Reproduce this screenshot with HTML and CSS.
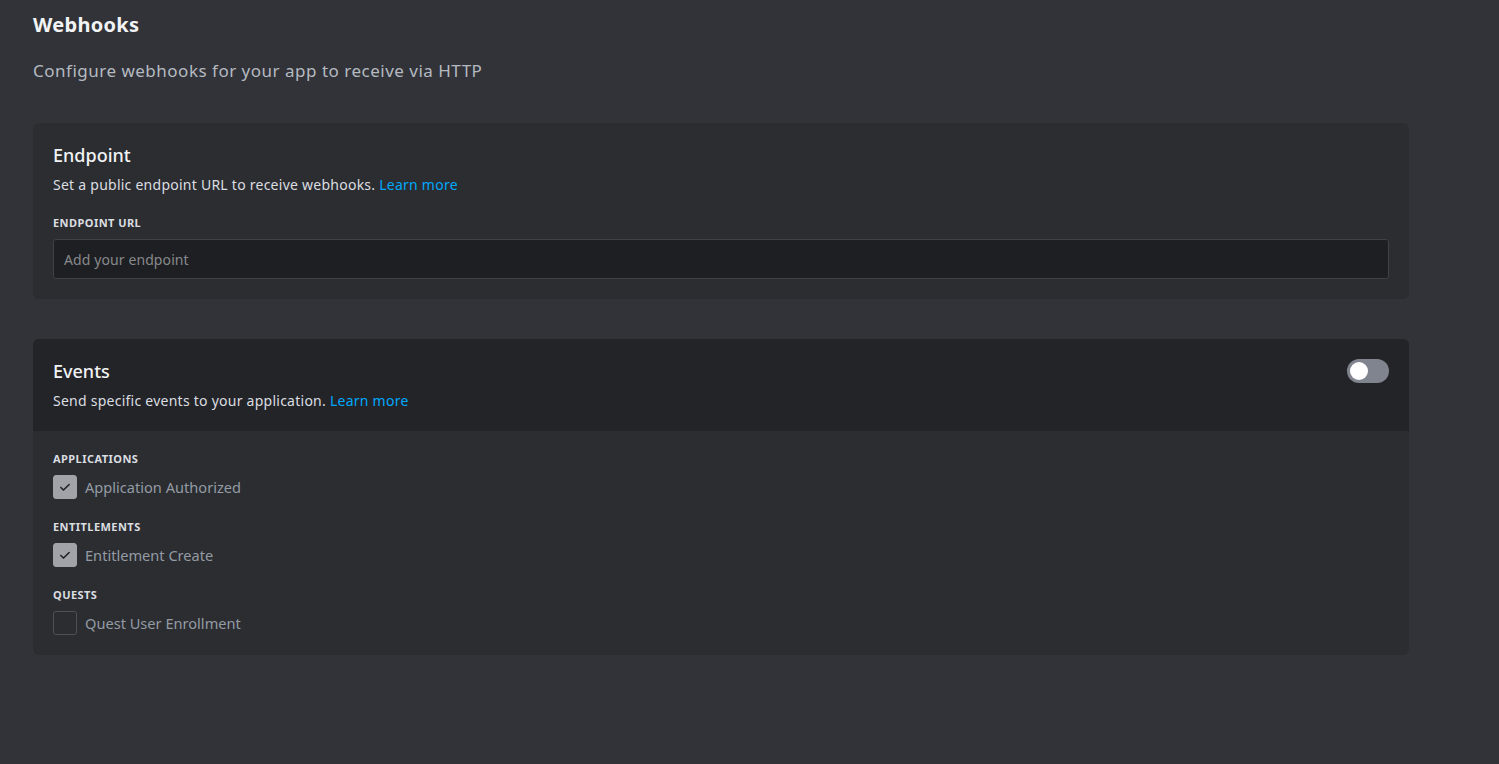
FILE: index.html
```html
<!DOCTYPE html>
<html>
<head>
<meta charset="utf-8">
<link rel="stylesheet" href="styles.css">
</head>
<body>
<main class="page">
  <h1 class="page-title">Webhooks</h1>
  <p class="page-sub">Configure webhooks for your app to receive via HTTP</p>

  <section class="card">
    <div class="card-pad">
      <h2 class="card-title">Endpoint</h2>
      <p class="card-desc">Set a public endpoint URL to receive webhooks. <a class="link" href="#">Learn more</a></p>
      <div class="field-label">Endpoint URL</div>
      <input class="input" type="text" placeholder="Add your endpoint">
    </div>
  </section>

  <section class="card events">
    <div class="events-head">
      <div>
        <h2 class="card-title">Events</h2>
        <p class="card-desc">Send specific events to your application. <a class="link" href="#">Learn more</a></p>
      </div>
      <div class="toggle"><span class="knob"></span></div>
    </div>
    <div class="events-body">
      <div class="group">
        <div class="field-label">Applications</div>
        <label class="check-row"><span class="box checked"><svg viewBox="0 0 24 24" width="20" height="20"><path d="M7 12.5l3.2 3.2L17 9" fill="none" stroke="#1e1f22" stroke-width="1.8" stroke-linecap="round" stroke-linejoin="round"/></svg></span><span class="check-text">Application Authorized</span></label>
      </div>
      <div class="group">
        <div class="field-label">Entitlements</div>
        <label class="check-row"><span class="box checked"><svg viewBox="0 0 24 24" width="20" height="20"><path d="M7 12.5l3.2 3.2L17 9" fill="none" stroke="#1e1f22" stroke-width="1.8" stroke-linecap="round" stroke-linejoin="round"/></svg></span><span class="check-text">Entitlement Create</span></label>
      </div>
      <div class="group">
        <div class="field-label">Quests</div>
        <label class="check-row"><span class="box"></span><span class="check-text">Quest User Enrollment</span></label>
      </div>
    </div>
  </section>
</main>
</body>
</html>
```

FILE: styles.css
```css
* { box-sizing: border-box; }
html, body { margin: 0; padding: 0; }
body {
  background: #313338;
  font-family: "Noto Sans", "Open Sans", sans-serif;
  color: #dbdee1;
  width: 1499px;
  height: 764px;
  overflow: hidden;
}
.page {
  width: 1376px;
  margin-left: 33px;
  padding-top: 11px;
}
.page-title {
  margin: 0;
  font-size: 20px;
  line-height: 28px;
  font-weight: 700;
  letter-spacing: 0.3px;
  color: #f2f3f5;
}
.page-sub {
  margin: 20px 0 0;
  font-size: 17px;
  line-height: 24px;
  letter-spacing: 0.5px;
  color: #b5bac1;
}
.card {
  background: #2b2d31;
  border-radius: 6px;
  margin-top: 40px;
  overflow: hidden;
}
.card-pad { padding: 20px; }
.card-title {
  margin: 0;
  font-size: 18px;
  line-height: 24px;
  font-weight: 500;
  color: #f2f3f5;
}
.card-desc {
  margin: 8px 0 0;
  font-size: 14px;
  line-height: 20px;
  letter-spacing: 0.25px;
  color: #dbdee1;
}
.link { color: #00a8fc; text-decoration: none; }
.field-label {
  font-size: 11px;
  line-height: 16px;
  font-weight: 700;
  text-transform: uppercase;
  letter-spacing: 0.45px;
  color: #dbdee1;
}
.card-desc + .field-label { margin-top: 20px; }
.input {
  display: block;
  width: 100%;
  height: 40px;
  margin-top: 8px;
  background: #1e1f22;
  border: 1px solid #3f4147;
  border-radius: 3px;
  padding: 0 10px;
  font-family: inherit;
  font-size: 14px;
  letter-spacing: 0.1px;
  color: #dbdee1;
  outline: none;
}
.input::placeholder { color: #87898c; }
.events-head {
  background: #232428;
  padding: 20px;
  display: flex;
  justify-content: space-between;
  align-items: flex-start;
}
.toggle {
  width: 42px;
  height: 24px;
  border-radius: 12px;
  background: #80848e;
  position: relative;
}
.knob {
  position: absolute;
  left: 3px;
  top: 3px;
  width: 18px;
  height: 18px;
  border-radius: 50%;
  background: #ffffff;
}
.events-body {
  padding: 20px;
  display: flex;
  flex-direction: column;
  gap: 20px;
}
.check-row {
  display: flex;
  align-items: center;
  gap: 8px;
  margin-top: 8px;
}
.box {
  width: 24px;
  height: 24px;
  border-radius: 3px;
  border: 1px solid #4e5058;
  display: flex;
  align-items: center;
  justify-content: center;
}
.box.checked {
  background: #a1a3a9;
  border-color: #a1a3a9;
}
.check-text {
  font-size: 14.6px;
  line-height: 24px;
  color: #949ba4;
}
```
